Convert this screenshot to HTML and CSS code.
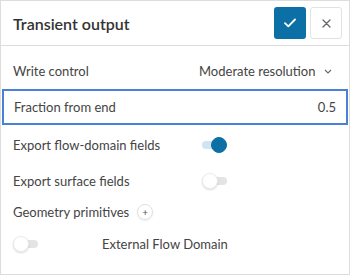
FILE: index.html
```html
<!DOCTYPE html>
<html lang="en">
  <head>
    <meta charset="UTF-8" />
    <title>Transient output</title>
    <link rel="stylesheet" href="styles.css">
  </head>
  <body>
    <div class="panel">
      <div class="panel-header">
        <div class="panel-title">Transient output</div>
        <button class="btn-confirm">
          <svg width="12" height="10" viewBox="0 0 12 10"><path d="M1 5.2 L4.3 8.3 L11 1.5" fill="none" stroke="#fff" stroke-width="1.8" stroke-linecap="round" stroke-linejoin="round"/></svg>
        </button>
        <button class="btn-close">
          <svg width="9" height="9" viewBox="0 0 9 9"><path d="M1 1 L8 8 M8 1 L1 8" stroke="#666" stroke-width="1.3" stroke-linecap="round"/></svg>
        </button>
      </div>

      <div class="panel-body">
        <div class="row row-select">
          <span class="label">Write control</span>
          <div class="select">
            <span class="select-value">Moderate resolution</span>
            <svg width="8" height="5" viewBox="0 0 8 5"><path d="M1 1 L4 4 L7 1" fill="none" stroke="#666" stroke-width="1.1"/></svg>
          </div>
        </div>

        <div class="row row-input">
          <span class="label">Fraction from end</span>
          <span class="input-value">0.5</span>
        </div>

        <div class="row row-toggle">
          <span class="label label-fixed">Export flow-domain fields</span>
          <span class="toggle on"><span class="knob"></span></span>
        </div>

        <div class="row row-toggle">
          <span class="label label-fixed">Export surface fields</span>
          <span class="toggle"><span class="knob"></span></span>
        </div>

        <div class="row row-small">
          <span class="label">Geometry primitives</span>
          <span class="add-btn">+</span>
        </div>

        <div class="row row-toggle row-last">
          <span class="toggle"><span class="knob"></span></span>
          <span class="label label-indent">External Flow Domain</span>
        </div>
      </div>
    </div>
  </body>
</html>
```

FILE: styles.css
```css
body {
  margin: 0;
  font-family: Lato, "Liberation Sans", sans-serif;
  color: #333;
  background-color: #fff;
}

.panel {
  width: 350px;
  height: 275px;
  box-sizing: border-box;
  border: 1px solid #ddd;
  background-color: #fff;
}

.panel-header {
  display: flex;
  align-items: center;
  height: 44px;
  padding: 0 7px 0 12px;
  border-bottom: 1px solid #ddd;
}

.panel-title {
  flex: 1;
  font-size: 16px;
  font-weight: 600;
  color: #333;
}

.btn-confirm,
.btn-close {
  width: 32px;
  height: 32px;
  border-radius: 3px;
  display: flex;
  align-items: center;
  justify-content: center;
  padding: 0;
  cursor: pointer;
}

.btn-confirm {
  background-color: #0c6fa5;
  border: none;
  margin-right: 4px;
}

.btn-close {
  background-color: #fff;
  border: 1px solid #e2e2e2;
}

.panel-body {
  padding-top: 7px;
}

.row {
  display: flex;
  align-items: center;
  padding: 0 12px;
  font-size: 13px;
}

.row-select {
  height: 36px;
}

.row-input {
  height: 32px;
  margin: 0 1px 2px 1px;
  padding: 0 10px;
  border: 2px solid #4a80d8;
}

.row-toggle {
  height: 36px;
}

.row-small {
  height: 26px;
}

.row-last {
  height: 38px;
}

.label {
  color: #444;
}

.label-fixed {
  width: 189px;
}

.label-indent {
  margin-left: 64px;
}

.select {
  margin-left: auto;
  display: flex;
  align-items: center;
}

.select-value {
  width: 116px;
  overflow: hidden;
  white-space: nowrap;
  color: #444;
}

.select svg {
  margin-left: 9px;
  margin-right: 5px;
}

.input-value {
  margin-left: auto;
  color: #444;
}

/* Toggle switches */
.toggle {
  position: relative;
  width: 25px;
  height: 8px;
  border-radius: 4px;
  background-color: #e4e4e4;
}

.toggle.on {
  background-color: #cfe5ef;
}

.knob {
  position: absolute;
  top: -4px;
  left: 0;
  width: 16px;
  height: 16px;
  box-sizing: border-box;
  border-radius: 50%;
  background-color: #fff;
  border: 1px solid #eee;
  box-shadow: 0 1px 2px rgba(0, 0, 0, 0.15);
}

.toggle.on .knob {
  left: 9px;
  background-color: #0c6fa5;
  border-color: #0c6fa5;
  box-shadow: none;
}

.add-btn {
  width: 14px;
  height: 14px;
  margin-left: 8px;
  border-radius: 50%;
  border: 1px solid #e0e0e0;
  box-shadow: 0 1px 2px rgba(0, 0, 0, 0.08);
  display: flex;
  align-items: center;
  justify-content: center;
  font-size: 10px;
  color: #555;
  line-height: 1;
}
```
